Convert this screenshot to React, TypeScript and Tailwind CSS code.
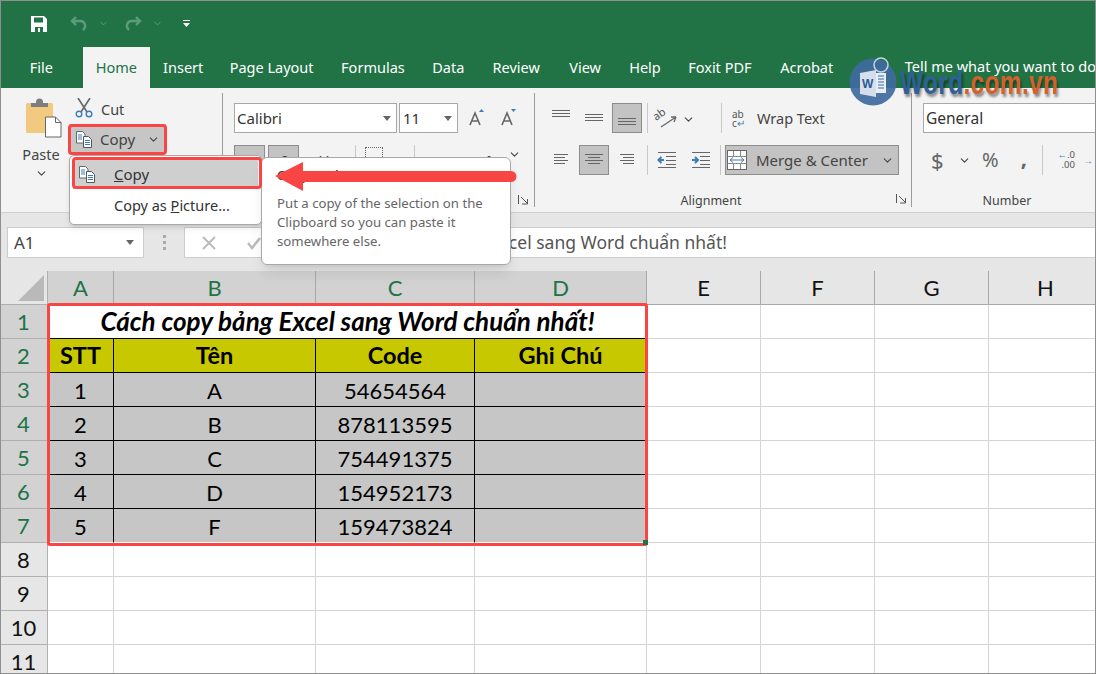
import { ChevronDown } from "lucide-react"

const ui = "font-['Noto_Sans',sans-serif]"
const sheet = "font-[Lato,'Open_Sans',sans-serif]"

const tabs = [
  { name: "File", w: "w-[83px]" },
  { name: "Home", w: "w-[67px]" },
  { name: "Insert", w: "w-[67px]" },
  { name: "Page Layout", w: "w-[110px]" },
  { name: "Formulas", w: "w-[93px]" },
  { name: "Data", w: "w-[58px]" },
  { name: "Review", w: "w-[78px]" },
  { name: "View", w: "w-[60px]" },
  { name: "Help", w: "w-[60px]" },
  { name: "Foxit PDF", w: "w-[90px]" },
  { name: "Acrobat", w: "w-[84px]" },
]

const Chev = ({ className = "" }: { className?: string }) => (
  <ChevronDown size={13} strokeWidth={2} className={className} />
)

const Caret = () => (
  <svg width="10" height="6" viewBox="0 0 10 6"><path d="M1 0h8L5 5z" fill="#666" /></svg>
)

function CopyIcon() {
  return (
    <svg width="19" height="19" viewBox="0 0 19 19" fill="none">
      <path d="M1.500 1.500h6l2.500 2.500v9h-8.500z" fill="#fff" stroke="#666" />
      <path d="M8.500 6.500h5l3 3v8h-8z" fill="#fff" stroke="#555" />
      <path d="M10 10.500h5M10 12.500h5M10 14.500h5" stroke="#3b7cbd" />
      <path d="M3 5h4M3 7h4M3 9h4" stroke="#3b7cbd" />
    </svg>
  )
}

function PasteIcon() {
  return (
    <svg width="36" height="40" viewBox="0 0 36 40" fill="none">
      <rect x="0" y="5" width="27" height="30" rx="1.500" fill="#f1c97f" />
      <path d="M5 5h17v4H5z" fill="#7d7d7d" />
      <circle cx="13.500" cy="4" r="3.500" fill="#7d7d7d" />
      <path d="M19.500 19h10l5.500 5.500V39H19.500z" fill="#fff" stroke="#666" />
      <path d="M29.500 19v5.500H35" stroke="#666" />
    </svg>
  )
}

function ScissorsIcon() {
  return (
    <svg width="18" height="20" viewBox="0 0 18 20" fill="none">
      <path d="M3 0l9 14M15 0L6 14" stroke="#666" strokeWidth="1.600" />
      <circle cx="4" cy="16" r="2.800" stroke="#3b7cbd" strokeWidth="1.400" />
      <circle cx="14" cy="16" r="2.800" stroke="#3b7cbd" strokeWidth="1.400" />
    </svg>
  )
}

// horizontal text-align glyphs, drawn as line lists
function Lines({ rows, width = 20 }: { rows: number[][]; width?: number }) {
  return (
    <svg width={width} height="20" viewBox={`0 0 ${width} 20`} stroke="#666" strokeWidth="1">
      {rows.map((r, i) => (
        <line key={i} x1={r[0]} x2={r[1]} y1={r[2] + 0.5} y2={r[2] + 0.5} />
      ))}
    </svg>
  )
}

function GrowA({ up }: { up: boolean }) {
  return (
    <svg width="18" height="18" viewBox="0 0 18 18" fill="none">
      <path d="M2 16L7 4l5 12M4 12h6" stroke="#666" strokeWidth="1.600" />
      <path d={up ? "M11 3l2.500-3 2.500 3z" : "M11 0h5l-2.500 3z"} fill="#3b7cbd" />
    </svg>
  )
}

function Orient() {
  return (
    <svg width="22" height="24" viewBox="0 0 22 24" fill="none" className="overflow-visible">
      <path d="M5 21L20 11M20 11h-5M20 11l-2 5" stroke="#666" strokeWidth="1.300" />
      <text x="0" y="15" fontSize="11" fill="#555" transform="rotate(-35 0 15)" fontFamily="Noto Sans">ab</text>
    </svg>
  )
}

function Indent({ dir }: { dir: "in" | "out" }) {
  return (
    <svg width="19" height="16" viewBox="0 0 19 16" fill="none">
      <path d="M1 .5h18M9 4.500h10M9 8.500h10M9 12.500h10M1 15.500h18" stroke="#666" />
      <path d={dir === "out" ? "M7 8H2M4.500 5L1.500 8l3 3" : "M1 8h5M4 5l3 3-3 3"} stroke="#3b7cbd" strokeWidth="2" />
    </svg>
  )
}

function Launcher() {
  return (
    <svg width="10" height="10" viewBox="0 0 10 10" fill="none" stroke="#555">
      <path d="M.5 0v9M3 2l6 6M9.500 4v5H4" />
    </svg>
  )
}

const VSep = ({ className = "" }: { className?: string }) => <div className={`w-px bg-[#c8c8c8] shrink-0 ${className}`} />

function GroupLabel({ children }: { children: string }) {
  return <div className="h-5 text-[12.500px] leading-5 text-[#444] text-center">{children}</div>
}

function AlignCell({ on, children }: { on?: boolean; children: React.ReactNode }) {
  return (
    <div className={`w-[30px] h-[30px] flex items-center justify-center ${on ? "bg-[#c3c3c3] border border-[#8d8d8d]" : ""}`}>
      {children}
    </div>
  )
}

function Ribbon() {
  return (
    <div className={`h-[124px] bg-[#f3f3f3] flex text-[#444] ${ui}`}>
      {/* clipboard */}
      <div className="w-[222px] shrink-0 flex pt-[10px] pl-[22px]">
        <div className="w-[38px] flex flex-col items-center">
          <div className="ml-[6px]"><PasteIcon /></div>
          <div className="mt-[6px] text-[14.500px] leading-5">Paste</div>
          <Chev className="mt-[3px]" />
        </div>
        <div className="ml-[9px] w-[97px]">
          <div className="h-[26px] flex items-start pl-[6px] gap-[8px] text-[14.500px] leading-[22px]">
            <ScissorsIcon /> Cut
          </div>
          <div className="h-[30px] bg-[#c6c6c6] flex items-center pl-[6px] gap-[6px] text-[15px]">
            <CopyIcon /> Copy <Chev className="ml-[6px]" />
          </div>
        </div>
      </div>
      <div className="w-px shrink-0 h-[114px] mt-[5px] bg-[#9a9a9a]" />
      {/* font */}
      <div className="w-[311px] shrink-0 pt-[15px] pl-[11px]">
        <div className="flex items-center">
          <div className="w-[163px] h-[30px] bg-white border border-[#a8a8a8] flex items-center justify-between pl-[2px] pr-[4px] pt-[1px] text-[15px] text-[#333]">
            Calibri <Caret />
          </div>
          <div className="ml-[2px] w-[59px] h-[30px] bg-white border border-[#a8a8a8] flex items-center justify-between pl-[3px] pr-[4px] pt-[1px] text-[15px] text-[#333]">
            11 <Caret />
          </div>
          <div className="ml-[10px]"><GrowA up /></div>
          <div className="ml-[14px]"><GrowA up={false} /></div>
        </div>
        <div className="mt-[12px] flex items-center gap-[3px]">
          <div className="w-[31px] h-[30px] bg-[#c3c3c3] border border-[#8d8d8d] flex items-center justify-center font-bold text-[15px]">B</div>
          <div className="w-[31px] h-[30px] bg-[#c3c3c3] border border-[#8d8d8d] flex items-center justify-center italic text-[15px]">I</div>
          <div className="ml-[12px] w-[20px] h-[30px] flex items-center justify-center underline text-[15px]">U</div>
          <div className="ml-[18px] h-[30px] w-px bg-[#c8c8c8]" />
          <div className="ml-[6px] w-[18px] h-[16px] border border-dotted border-[#666] self-start mt-[2px]" />
          <div className="ml-[28px] h-[30px] w-px bg-[#c8c8c8]" />
          <div className="ml-[62px] w-[18px] h-[30px] flex items-center justify-center text-[15px] font-semibold">A</div>
          <div className="ml-[7px] self-start"><Chev className="mt-[3px]" /></div>
        </div>
        <div className="mt-[20px] pl-[286px] -ml-[2px]"><Launcher /></div>
      </div>
      <div className="w-px shrink-0 h-[114px] mt-[5px] bg-[#9a9a9a]" />
      {/* alignment */}
      <div className="w-[376px] shrink-0 flex flex-col">
        <div className="pt-[15px] pl-[11px] h-[57px] flex items-start">
          <div className="flex gap-[3px]">
            <AlignCell><Lines rows={[[1, 19, 2], [1, 19, 5], [1, 19, 8]]} /></AlignCell>
            <AlignCell><Lines rows={[[1, 19, 6], [1, 19, 9], [1, 19, 12]]} /></AlignCell>
            <AlignCell on><Lines rows={[[1, 19, 10], [1, 19, 13], [1, 19, 16]]} /></AlignCell>
          </div>
          <VSep className="h-[30px] ml-[5px]" />
          <div className="ml-[8px] h-[30px] flex items-center"><Orient /></div>
          <Chev className="ml-[4px] mt-[10px]" />
          <VSep className="h-[30px] ml-[26px]" />
          <div className="ml-[10px] h-[30px] pt-[2px] flex items-center gap-[7px] text-[14.500px] text-[#444]">
            <span className="text-[10px] leading-[9px] text-[#555] w-[18px]">ab<br />c<span className="text-[#3b7cbd]">↵</span></span>
            Wrap Text
          </div>
        </div>
        <div className="pl-[11px] h-[46px] flex items-start">
          <div className="flex gap-[3px]">
            <AlignCell><Lines rows={[[1, 15, 4], [1, 12, 7], [1, 15, 10], [1, 12, 13]]} width={16} /></AlignCell>
            <AlignCell on><Lines rows={[[1, 19, 4], [4, 16, 7], [1, 19, 10], [4, 16, 13]]} /></AlignCell>
            <AlignCell><Lines rows={[[1, 15, 4], [4, 15, 7], [1, 15, 10], [4, 15, 13]]} width={16} /></AlignCell>
          </div>
          <VSep className="h-[30px] ml-[5px]" />
          <div className="ml-[9px] h-[30px] flex items-center"><Indent dir="out" /></div>
          <div className="ml-[15px] h-[30px] flex items-center"><Indent dir="in" /></div>
          <VSep className="h-[30px] ml-[10px]" />
          <div className="ml-[4px] w-[174px] h-[30px] bg-[#c3c3c3] border border-[#8d8d8d] flex items-center pl-[1px] gap-[9px] text-[15px]">
            <svg width="20" height="20" viewBox="0 0 20 20" fill="none">
              <rect x=".5" y=".5" width="19" height="19" fill="#fff" stroke="#666" />
              <path d="M.5 6.500h19M.5 13.500h19M6.500 1v5M13.500 1v5M6.500 14v5M13.500 14v5" stroke="#888" />
              <path d="M3 10h14M6 7.500L3 10l3 2.500M14 7.500l3 2.500-3 2.500" stroke="#3b7cbd" />
            </svg>
            Merge &amp; Center
            <Chev className="ml-auto mr-[4px]" />
          </div>
        </div>
        <div className="relative pr-[24px]">
          <GroupLabel>Alignment</GroupLabel>
          <div className="absolute right-[5px] top-[3px]"><Launcher /></div>
        </div>
      </div>
      <div className="w-px shrink-0 h-[114px] mt-[5px] bg-[#9a9a9a]" />
      {/* number */}
      <div className="flex-1 min-w-0 flex flex-col pl-[11px]">
        <div className="pt-[15px] h-[57px]">
          <div className="h-[30px] bg-white border border-[#a8a8a8] border-r-0 flex items-center pl-[2px] pt-[2px] text-[15.500px] text-[#333]">
            General
          </div>
        </div>
        <div className="h-[46px] flex items-center self-start pb-[16px] text-[#666] whitespace-nowrap">
          <span className="ml-[8px] text-[22px] leading-none w-[14px]">$</span>
          <Chev className="ml-[13px] text-[#444] shrink-0" />
          <span className="ml-[11px] text-[20px] leading-none">%</span>
          <span className="ml-[22px] text-[22px] leading-none font-bold -mt-[6px]">,</span>
          <VSep className="h-[30px] ml-[15px]" />
          <span className="ml-[10px] text-[9.500px] leading-[10px] text-[#555] text-right w-[22px] shrink-0">
            <span className="text-[#3b7cbd]">←</span>.0<br />.00
          </span>
          <span className="ml-[8px] text-[#3b7cbd] text-[10px]">→</span>
        </div>
        <div className="-ml-[11px] w-[190px]"><GroupLabel>Number</GroupLabel></div>
      </div>
    </div>
  )
}

function FormulaBar() {
  return (
    <div className={`h-[59px] bg-[#e6e6e6] border-t border-[#cfcfcf] pt-[14px] ${ui}`}>
      <div className="h-[31px] flex">
        <div className="ml-[7px] w-[137px] bg-white border border-[#cdcdcd] flex items-center justify-between pl-[6px] pr-[8px] text-[17px] text-[#444]">
          A1 <Caret />
        </div>
        <div className="w-[40px] flex flex-col items-center justify-center gap-[3px]">
          <div className="w-[3px] h-[3px] bg-[#aaa]" />
          <div className="w-[3px] h-[3px] bg-[#aaa]" />
          <div className="w-[3px] h-[3px] bg-[#aaa]" />
        </div>
        <div className="flex-1 bg-white border-y border-l border-[#cdcdcd] flex items-center pl-[16px] text-[17.500px] text-[#555]">
          <svg width="16" height="16" viewBox="0 0 16 16" stroke="#bbb" strokeWidth="2"><path d="M2 2l12 12M14 2L2 14" /></svg>
          <svg className="ml-[29px]" width="16" height="16" viewBox="0 0 16 16" fill="none" stroke="#bbb" strokeWidth="2.400"><path d="M2 8l4 5 8-10" /></svg>
          <span className="ml-[94px] whitespace-nowrap">Cách copy bảng Excel sang Word chuẩn nhất!</span>
        </div>
      </div>
    </div>
  )
}

const cols = ["A", "B", "C", "D", "E", "F", "G", "H"]
const data = [
  ["1", "A", "54654564"],
  ["2", "B", "878113595"],
  ["3", "C", "754491375"],
  ["4", "D", "154952173"],
  ["5", "F", "159473824"],
]

function RowHead({ n }: { n: number }) {
  const sel = n <= 7
  return (
    <div className={`h-[34px] flex items-center justify-center text-[22px] border-r border-b ${sel ? "bg-[#d2d2d2] text-[#217346] border-[#b0b0b0]" : "bg-[#e6e6e6] text-[#111] border-[#b0b0b0]"}`}>
      {n}
    </div>
  )
}

function Blank({ n }: { n: number }) {
  return (
    <>
      <RowHead n={n} />
      {Array.from({ length: 8 }).map((_, i) => (
        <div key={i} className="h-[34px] border-r border-b border-[#d4d4d4]" />
      ))}
    </>
  )
}

function Sheet() {
  return (
    <div className={`grid grid-cols-[48px_66px_202px_159px_172px_114px_114px_114px_114px] bg-white text-black ${sheet}`}>
      <div className="h-[34px] bg-[#e6e6e6] border-r border-b border-[#b0b0b0] flex items-end justify-end pr-[3px] pb-[3px]">
        <svg width="26" height="26" viewBox="0 0 26 26"><path d="M26 0v26H0z" fill="#b9b9b9" /></svg>
      </div>
      {cols.map((c, i) => (
        <div
          key={c}
          className={`h-[34px] flex items-center justify-center text-[22px] border-r border-b border-[#a8a8a8] ${i < 4 ? "bg-[#d2d2d2] text-[#217346]" : "bg-[#e6e6e6] text-[#111]"}`}
        >
          {c}
        </div>
      ))}

      <RowHead n={1} />
      <div className="col-span-4 h-[34px] flex items-center justify-center font-bold italic text-[26px] border-b border-black">
        Cách copy bảng Excel sang Word chuẩn nhất!
      </div>
      {Array.from({ length: 4 }).map((_, i) => (
        <div key={i} className="h-[34px] border-r border-b border-[#d4d4d4]" />
      ))}

      <RowHead n={2} />
      {["STT", "Tên", "Code", "Ghi Chú"].map(h => (
        <div key={h} className="h-[34px] pt-[1px] bg-[#c8c800] flex items-center justify-center font-bold text-[23.500px] border-r border-b border-black">
          {h}
        </div>
      ))}
      {Array.from({ length: 4 }).map((_, i) => (
        <div key={i} className="h-[34px] border-r border-b border-[#d4d4d4]" />
      ))}

      {data.map((row, r) => (
        <div key={r} className="contents">
          <RowHead n={r + 3} />
          {[...row, ""].map((v, i) => (
            <div key={i} className={`h-[34px] pt-[1px] bg-[#c6c6c6] flex items-center justify-center text-[22px] border-r border-b border-black ${r === 4 ? "border-b-white" : ""}`}>
              {v}
            </div>
          ))}
          {Array.from({ length: 4 }).map((_, i) => (
            <div key={i} className="h-[34px] border-r border-b border-[#d4d4d4]" />
          ))}
        </div>
      ))}

      {[8, 9, 10, 11].map(n => <Blank key={n} n={n} />)}
    </div>
  )
}

export default function App() {
  return (
    <div className="relative w-[1096px] h-[674px] overflow-hidden bg-white">
      {/* title bar */}
      <div className="h-[47px] bg-[#217346] flex items-center pl-[31px]">
        <svg width="16" height="16" viewBox="0 0 16 16">
          <path d="M0 0h13l3 3v13H0z" fill="#fff" />
          <path d="M3 1.500h9v5H3zM4 11h8v5H4z" fill="#217346" />
          <path d="M7 12h2v4H7z" fill="#fff" />
        </svg>
        <svg className="ml-[23px]" width="18" height="16" viewBox="0 0 18 16" fill="none" stroke="#5d9c7b" strokeWidth="2.400">
          <path d="M6 1L2 5l4 4M2 5h9a5 5 0 0 1 2 9" />
        </svg>
        <ChevronDown size={11} color="#5d9c7b" className="ml-[10px]" />
        <svg className="ml-[15px]" width="18" height="16" viewBox="0 0 18 16" fill="none" stroke="#5d9c7b" strokeWidth="2.400">
          <path d="M12 1l4 4-4 4M16 5H7a5 5 0 0 0-2 9" />
        </svg>
        <ChevronDown size={11} color="#5d9c7b" className="ml-[10px]" />
        <svg className="ml-[20px]" width="7" height="8" viewBox="0 0 7 8" fill="#fff">
          <path d="M0 0h7v1H0zM0 3h7L3.500 7z" />
        </svg>
      </div>
      {/* tabs */}
      <div className={`h-[41px] bg-[#217346] flex text-white text-[14.500px] ${ui}`}>
        {tabs.map(t => (
          <div
            key={t.name}
            className={`${t.w} flex items-center justify-center ${t.name === "Home" ? "bg-[#f3f3f3] text-[#217346]" : ""}`}
          >
            {t.name}
          </div>
        ))}
        <div className="ml-[56px] flex items-center whitespace-nowrap pb-[2px]">Tell me what you want to do</div>
      </div>
      <Ribbon />
      <FormulaBar />
      <Sheet />

      {/* copy dropdown */}
      <div className={`absolute left-[69px] top-[155px] w-[193px] h-[70px] bg-white border border-[#a8a8a8] rounded-[5px] shadow-md text-[14.500px] text-[#333] ${ui}`}>
        <div className="h-[30px] mt-[3px] mx-[3px] bg-[#cfcfcf] flex items-center pl-[5px] text-[15px]">
          <CopyIcon />
          <span className="ml-[17px]"><span className="underline">C</span>opy</span>
        </div>
        <div className="h-[34px] flex items-center pl-[44px] whitespace-nowrap">
          Copy as&nbsp;<span className="underline">P</span>icture...
        </div>
      </div>

      {/* tooltip */}
      <div className={`absolute left-[261px] top-[157px] w-[250px] h-[108px] bg-white border border-[#a8a8a8] rounded-[6px] shadow-lg pl-[15px] pt-[8px] text-[13.200px] leading-[19px] text-[#666] ${ui}`}>
        <div className="font-semibold text-[#444] text-[13px] h-[28px]">Copy (Ctrl+C)</div>
        Put a copy of the selection on the<br />Clipboard so you can paste it<br />somewhere else.
      </div>

      {/* red annotation boxes */}
      <div className="absolute left-[68px] top-[124px] w-[99px] h-[31px] border-[3px] border-[#fa4545] rounded-[4px]" />
      <div className="absolute left-[72px] top-[157px] w-[190px] h-[32px] border-[3px] border-[#fa4545] rounded-[4px]" />
      <div className="absolute left-[47px] top-[303px] w-[601px] h-[243px] border-[3px] border-[#fa4545] rounded-[3px]" />
      <div className="absolute left-[643px] top-[540px] w-[5px] h-[5px] bg-[#217346]" />

      {/* red arrow */}
      <svg className="absolute left-[270px] top-[155px]" width="250" height="40" viewBox="0 0 250 40">
        <path d="M5 21L33 7v9h208a5.500 5.500 0 0 1 0 11H33v9z" fill="#fa4545" />
      </svg>

      {/* watermark */}
      <div className="absolute left-[849px] top-[56px] flex items-center">
        <svg width="50" height="50" viewBox="0 0 50 50">
          <circle cx="24" cy="26" r="23.500" fill="#3f6a9f" fillOpacity=".92" />
          <circle cx="32" cy="9" r="7" fill="none" stroke="#c8d3df" strokeWidth="1.500" />
          <path d="M11 17l16-3v27l-16-3z" fill="#d5deea" />
          <path d="M27 17h10v20H27z" fill="#e8edf4" />
          <path d="M29 20h6M29 23h6M29 26h6M29 29h6M29 32h6" stroke="#3f6a9f" />
          <text x="13" y="32" fontSize="12" fontWeight="700" fill="#2a5a94" fontFamily="Liberation Sans">W</text>
        </svg>
        <div className="ml-[1px] mt-[2px] origin-left scale-x-[0.74] font-['Liberation_Sans',sans-serif] font-bold text-[33px] leading-none tracking-[0.5px] whitespace-nowrap [text-shadow:2px_3px_3px_rgba(0,0,0,0.45)]">
          <span className="text-[#2f6098]">Word</span>
          <span className="text-[#d0622c]">.com.vn</span>
        </div>
      </div>

      <div className="absolute inset-0 border border-[#8f8f8f] pointer-events-none" />
    </div>
  )
}
